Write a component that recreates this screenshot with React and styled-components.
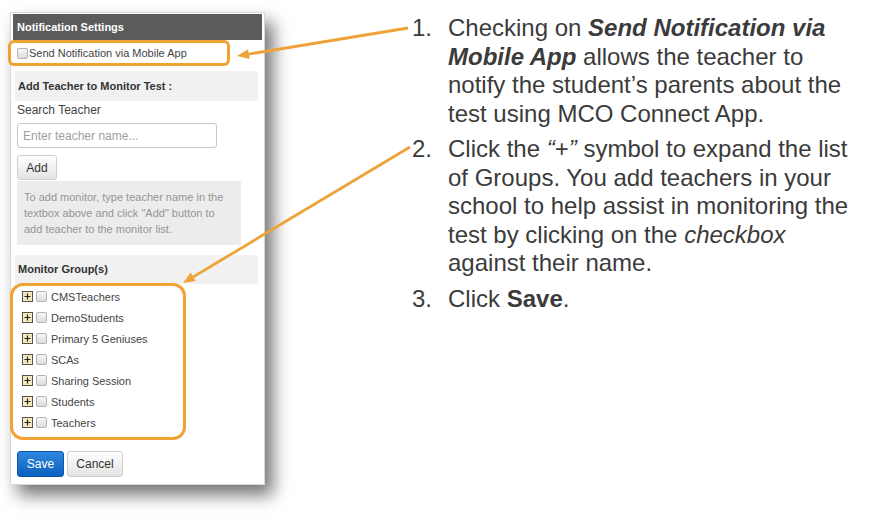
import styled, { createGlobalStyle } from "styled-components";

const GlobalStyle = createGlobalStyle`
  html, body {
    margin: 0;
    background: #fff;
  }
  body {
    font-family: "Liberation Sans", Arial, sans-serif;
  }
`;

const Page = styled.div`
  position: relative;
  width: 876px;
  height: 519px;
  box-sizing: border-box;
  padding: 12px 0 0 10px;
  display: flex;
  align-items: flex-start;
  overflow: hidden;
`;

const Panel = styled.div`
  width: 255px;
  box-sizing: border-box;
  background: #fff;
  border: 1px solid #d8d8d8;
  padding: 1px 2px 7px;
  box-shadow: 8px 10px 16px rgba(0, 0, 0, 0.55);
  font-size: 11px;
  color: #333;
`;

const Header = styled.div`
  height: 26px;
  line-height: 26px;
  padding-left: 4px;
  background: #5b5b5b;
  color: #fff;
  font-weight: 700;
  font-size: 11px;
`;

const NotifyRow = styled.label`
  display: flex;
  align-items: center;
  width: 216px;
  height: 20px;
  margin: 3px 0 0 -2px;
  padding-left: 6px;
  box-sizing: border-box;
  border-radius: 3px;
  box-shadow: 0 0 0 3px #f0a233;
  color: #444;
  font-size: 11px;
`;

const Check = styled.span`
  display: inline-block;
  width: 11px;
  height: 11px;
  box-sizing: border-box;
  border: 1px solid #b4b4b4;
  border-radius: 2px;
  background: linear-gradient(#f6f6f6, #dcdcdc);
  margin-right: ${({ $gap }) => $gap || 1}px;
  flex: none;
`;

const SectionBar = styled.div`
  height: ${({ $h }) => $h}px;
  line-height: ${({ $h }) => $h}px;
  margin: ${({ $top }) => $top}px 4px 0 2px;
  padding-left: 3px;
  background: #f1f1f1;
  font-weight: 700;
  font-size: 11px;
  color: #333;
`;

const FieldLabel = styled.div`
  margin: 1px 0 0 4px;
  line-height: 16px;
  font-size: 12px;
  color: #444;
`;

const TextInput = styled.input`
  display: block;
  width: 200px;
  height: 25px;
  box-sizing: border-box;
  margin: 5px 0 0 4px;
  padding: 0 5px;
  border: 1px solid #c8c8c8;
  border-radius: 3px;
  font-family: inherit;
  font-size: 12px;
  color: #333;
  &::placeholder {
    color: #a0a0a0;
  }
`;

const Btn = styled.button`
  width: ${({ $w }) => $w}px;
  height: ${({ $h }) => $h || 25}px;
  padding: 0;
  border-radius: 3px;
  font-family: inherit;
  font-size: 12px;
  border: 1px solid ${({ $primary }) => ($primary ? "#0a58a8" : "#cfcfcf")};
  color: ${({ $primary }) => ($primary ? "#fff" : "#333")};
  background: ${({ $primary }) =>
    $primary
      ? "linear-gradient(#2f86de, #0b62bd)"
      : "linear-gradient(#ffffff, #e4e4e4)"};
`;

const AddBtn = styled(Btn)`
  display: block;
  margin: 7px 0 0 4px;
`;

const InfoBox = styled.div`
  width: 224px;
  height: 64px;
  box-sizing: border-box;
  margin: 1px 0 0 4px;
  padding: 8px 7px 0;
  background: #ececec;
  color: #959595;
  font-size: 11px;
  line-height: 16px;
`;

const GroupList = styled.div`
  width: 170px;
  margin-top: 2px;
  padding-bottom: 4px;
  border-radius: 10px;
  box-shadow: 0 0 0 3px #f0a233;
`;

const GroupRow = styled.div`
  height: 21px;
  display: flex;
  align-items: center;
  padding-left: 9px;
  font-size: 11px;
  color: #444;
`;

const Expander = styled.span`
  display: inline-flex;
  width: 11px;
  height: 11px;
  box-sizing: border-box;
  border: 1px solid #5a5240;
  background: #f4e9bf;
  margin-right: 3px;
  flex: none;
  svg {
    display: block;
  }
`;

const Actions = styled.div`
  display: flex;
  gap: 3px;
  margin: 14px 0 0 4px;
`;

const Steps = styled.ol`
  list-style: none;
  margin: 2px 0 0 147px;
  padding: 0;
  font-size: 24px;
  line-height: 28.5px;
  color: #3b3b3b;
  white-space: nowrap;
`;

const Step = styled.li`
  display: grid;
  grid-template-columns: 36px auto;
  margin-bottom: 7px;
`;

const Overlay = styled.svg`
  position: absolute;
  left: 0;
  top: 0;
  pointer-events: none;
`;

const groups = [
  "CMSTeachers",
  "DemoStudents",
  "Primary 5 Geniuses",
  "SCAs",
  "Sharing Session",
  "Students",
  "Teachers",
];

const PlusIcon = () => (
  <Expander>
    <svg width="9" height="9" viewBox="0 0 9 9">
      <path d="M1.5 4.5h6M4.5 1.5v6" stroke="#222" strokeWidth="1.2" />
    </svg>
  </Expander>
);

const Arrow = ({ x1, y1, x2, y2 }) => {
  const a = Math.atan2(y2 - y1, x2 - x1);
  const len = 12;
  const w = 5;
  const bx = x2 - Math.cos(a) * len;
  const by = y2 - Math.sin(a) * len;
  const px = -Math.sin(a) * w;
  const py = Math.cos(a) * w;
  return (
    <g>
      <line x1={x1} y1={y1} x2={bx} y2={by} stroke="#eea238" strokeWidth="2.8" />
      <polygon
        points={`${x2},${y2} ${bx + px},${by + py} ${bx - px},${by - py}`}
        fill="#eea238"
      />
    </g>
  );
};

export default function App() {
  return (
    <>
      <GlobalStyle />
      <Page>
        <Panel>
          <Header>Notification Settings</Header>
          <NotifyRow>
            <Check />
            Send Notification via Mobile App
          </NotifyRow>

          <SectionBar $h={30} $top={8}>
            Add Teacher to Monitor Test :
          </SectionBar>
          <FieldLabel>Search Teacher</FieldLabel>
          <TextInput placeholder="Enter teacher name..." />
          <AddBtn $w={40}>Add</AddBtn>
          <InfoBox>
            To add monitor, type teacher name in the textbox above and click
            "Add" button to add teacher to the monitor list.
          </InfoBox>

          <SectionBar $h={29} $top={10}>
            Monitor Group(s)
          </SectionBar>
          <GroupList>
            {groups.map((g) => (
              <GroupRow key={g}>
                <PlusIcon />
                <Check $gap={4} />
                {g}
              </GroupRow>
            ))}
          </GroupList>

          <Actions>
            <Btn $primary $w={47} $h={26}>
              Save
            </Btn>
            <Btn $w={56} $h={26}>
              Cancel
            </Btn>
          </Actions>
        </Panel>

        <Steps>
          <Step>
            <span>1.</span>
            <span>
              Checking on{" "}
              <b>
                <i>Send Notification via</i>
              </b>
              <br />
              <b>
                <i>Mobile App</i>
              </b>{" "}
              allows the teacher to
              <br />
              notify the student’s parents about the
              <br />
              test using MCO Connect App.
            </span>
          </Step>
          <Step>
            <span>2.</span>
            <span>
              Click the <i>“</i>+<i>”</i> symbol to expand the list
              <br />
              of Groups. You add teachers in your
              <br />
              school to help assist in monitoring the
              <br />
              test by clicking on the <i>checkbox</i>
              <br />
              against their name.
            </span>
          </Step>
          <Step>
            <span>3.</span>
            <span>
              Click <b>Save</b>.
            </span>
          </Step>
        </Steps>

        <Overlay width="876" height="519" viewBox="0 0 876 519">
          <Arrow x1={408} y1={28} x2={237} y2={56} />
          <Arrow x1={410} y1={147} x2={183} y2={283} />
        </Overlay>
      </Page>
    </>
  );
}
